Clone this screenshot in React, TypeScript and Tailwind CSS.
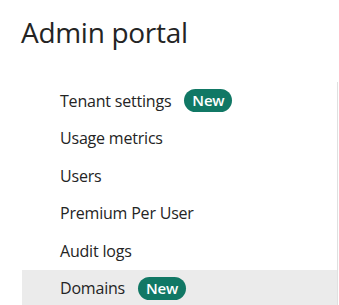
const items = [
  { label: "Tenant settings", badge: true },
  { label: "Usage metrics" },
  { label: "Users" },
  { label: "Premium Per User" },
  { label: "Audit logs" },
  { label: "Domains", badge: true, selected: true },
];

export default function App() {
  return (
    <div
      className="w-[339px] h-[305px] overflow-hidden bg-white text-[#242424]"
      style={{ fontFamily: '"Open Sans", "Noto Sans", sans-serif' }}
    >
      <h1 className="pl-[21px] pt-[12px] h-[82px] text-[28px] leading-[40px] font-normal tracking-[-0.3px]">
        Admin portal
      </h1>

      <nav className="w-[338px] border-r border-[#e0e0e0] h-[223px]">
        <ul>
          {items.map((item) => (
            <li
              key={item.label}
              className={
                "ml-[22px] h-[37.5px] pl-[38px] flex items-center gap-[13px] text-[16px] tracking-[-0.2px] " +
                (item.selected ? "bg-[#ebebeb]" : "")
              }
            >
              <span>{item.label}</span>
              {item.badge && (
                <span className="h-[23px] px-[8px] rounded-full bg-[#117865] text-white text-[15px] font-semibold leading-[23px]">
                  New
                </span>
              )}
            </li>
          ))}
        </ul>
      </nav>
    </div>
  );
}
